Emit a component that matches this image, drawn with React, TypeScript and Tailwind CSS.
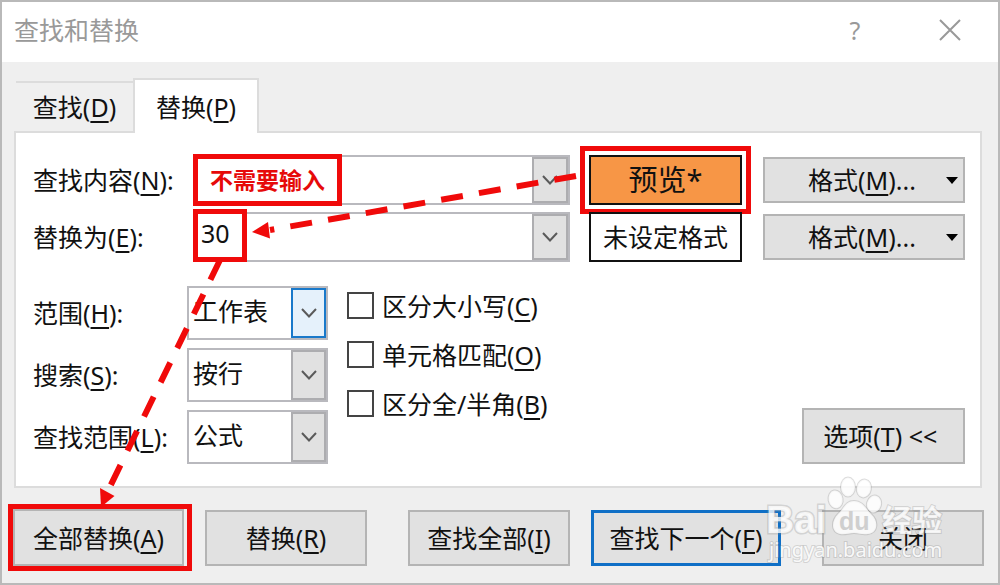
import type { ReactNode } from "react";

const BUTTON =
  "flex items-center justify-center border-2 border-[#b4b4b4] bg-[#e1e1e1] whitespace-nowrap";

function Mnemonic({ text, k, after = "" }: { text: string; k: string; after?: string }) {
  return (
    <span className="whitespace-pre">
      {text}(<span className="underline decoration-2 underline-offset-4">{k}</span>){after}
    </span>
  );
}

function Chevron() {
  return (
    <svg width="18" height="12" viewBox="0 0 18 12" fill="none" stroke="#5a5a5a" strokeWidth="2" aria-hidden="true">
      <path d="M2 2l7 7.5L16 2" />
    </svg>
  );
}

function Combo({ id, value, children }: { id: string; value: string; children?: ReactNode }) {
  return (
    <div className="relative flex h-[50px] min-w-0 flex-1 border-2 border-[#b9b9be] bg-white">
      <input id={id} defaultValue={value} className="min-w-0 flex-1 bg-transparent pb-2 pl-[6px] outline-none" />
      <button
        type="button"
        aria-label="展开列表"
        className="flex w-9 items-center justify-center border-2 border-[#adadb0] bg-[#e1e1e1]"
      >
        <Chevron />
      </button>
      {children}
    </div>
  );
}

function FormatButton() {
  return (
    <button type="button" className={`${BUTTON} relative h-[46px] w-[202px] pr-1`}>
      <Mnemonic text="格式" k="M" after="..." />
      <svg className="absolute right-1" width="14" height="8" viewBox="0 0 14 8" aria-hidden="true">
        <path d="M1 1h12L7 8z" fill="#000" />
      </svg>
    </button>
  );
}

function SelectRow({ id, text, k, value, hot }: { id: string; text: string; k: string; value: string; hot?: boolean }) {
  return (
    <div className="flex items-center">
      <label htmlFor={id} className="w-[154px]">
        <Mnemonic text={text} k={k} after=":" />
      </label>
      <div className="relative flex h-[54px] w-[141px] border-2 border-[#b9b9be] bg-white">
        <select id={id} className="w-full appearance-none bg-transparent pb-1 pl-1 outline-none">
          <option>{value}</option>
        </select>
        <span
          className={`pointer-events-none absolute inset-y-0 right-0 flex w-[35px] items-center justify-center border-2 ${
            hot ? "border-[#1979ca] bg-[#e5f1fb]" : "border-[#adadb0] bg-[#e1e1e1]"
          }`}
        >
          <Chevron />
        </span>
      </div>
    </div>
  );
}

function CheckRow({ text, k }: { text: string; k: string }) {
  return (
    <label className="flex h-[49px] items-center gap-2">
      <input type="checkbox" className="size-[27px] appearance-none border-2 border-[#444] bg-white" />
      <Mnemonic text={text} k={k} />
    </label>
  );
}

function Annotations() {
  return (
    <svg className="pointer-events-none absolute -top-[2px] -left-[2px]" width="1000" height="585" fill="none" stroke="#f00a0a" aria-hidden="true">
      <path d="M576 176L270 230" strokeWidth="6" strokeDasharray="22 16.3" />
      <path d="M252 232L268 222L270 238.500Z" fill="#f00a0a" stroke="none" />
      <path d="M220 260L106 495" strokeWidth="6" strokeDasharray="22 16" />
      <path d="M100 488L114.500 496L101 507Z" fill="#f00a0a" stroke="none" />
    </svg>
  );
}

function Watermark() {
  return (
    <svg
      className="pointer-events-none absolute right-[50px] bottom-[18px]"
      width="182"
      height="92"
      viewBox="0 0 182 92"
      fill="#fff"
      fillOpacity="0.8"
      stroke="#8c8c8c"
      strokeOpacity="0.3"
      strokeWidth="2"
      paintOrder="stroke"
    >
      <g transform="translate(2 2)">
        <ellipse cx="67.500" cy="24.500" rx="7" ry="9" transform="rotate(-10 67 24)" />
        <ellipse cx="80" cy="12" rx="7" ry="9.500" />
        <ellipse cx="96" cy="13.500" rx="7" ry="9" transform="rotate(10 96 13)" />
        <ellipse cx="106" cy="29" rx="7" ry="8.500" transform="rotate(15 106 29)" />
        <path d="M86 26C95 26 98 34 103 39C111 46 110 58 100 59C94 60 91 58 86 58C81 58 77 60 72 59C63 57 63 46 70 39C76 34 77 26 86 26Z" />
      </g>
      <g className="font-['Liberation_Sans',sans-serif] font-bold">
        <text x="0" y="60" fontSize="39" strokeWidth="3">Bai</text>
        <text x="73" y="57" fontSize="25" fill="#cfcfcf" stroke="none" fillOpacity="1">du</text>
      </g>
      <text x="116" y="58" fontSize="30" className="font-['Noto_Sans_CJK_SC',sans-serif] font-bold">经验</text>
      <text x="3" y="84" fontSize="20" fillOpacity="0.9" className="font-['Noto_Sans',sans-serif]">jingyan.baidu.com</text>
    </svg>
  );
}

export default function App() {
  return (
    <main className="relative min-h-screen border-2 border-[#b9b9b9] bg-[#efefef] font-['Noto_Sans','Noto_Sans_CJK_SC',sans-serif] text-[25px] leading-9 text-[#111]">
      <header className="flex h-[60px] items-center bg-white pr-9 pb-1 pl-3 text-[#999]">
        <h1 className="flex-1">查找和替换</h1>
        <button type="button" aria-label="帮助" className="w-8">?</button>
        <button type="button" aria-label="关闭窗口" className="ml-[67px]">
          <svg width="24" height="24" viewBox="0 0 24 24" stroke="#999" strokeWidth="2" aria-hidden="true">
            <path d="M2 2l20 20M22 2L2 22" />
          </svg>
        </button>
      </header>

      <div className="mr-4 ml-3 pt-4">
        <div role="tablist" className="flex items-end pl-[2px]">
          <button type="button" role="tab" aria-selected="false" className="h-[50px] w-[117px] border-t-2 border-[#dcdcdc]">
            <Mnemonic text="查找" k="D" />
          </button>
          <button
            type="button"
            role="tab"
            aria-selected="true"
            className="relative -mb-[2px] h-[55px] w-[126px] border-2 border-b-0 border-[#dcdcdc] bg-white"
          >
            <Mnemonic text="替换" k="P" />
          </button>
        </div>

        <section role="tabpanel" className="border-2 border-[#dcdcdc] bg-white pt-[22px] pr-[15px] pb-[22px] pl-[17px]">
          <div className="flex flex-col gap-[7px]">
            <div className="flex items-center">
              <label htmlFor="find" className="w-[160px]">
                <Mnemonic text="查找内容" k="N" after=":" />
              </label>
              <Combo id="find" value="">
                <div className="absolute -top-[3px] -left-[2px] flex h-[52px] w-[149px] items-center justify-center border-5 border-[#f00a0a] bg-white text-[23px] font-bold text-[#e60a0a]">
                  不需要输入
                </div>
              </Combo>
              <div className="ml-[19px] flex h-[50px] w-[153px] items-center justify-center border-2 border-[#111] bg-[#f79646] text-[29px] outline-5 outline-offset-4 outline-[#f00a0a]">
                预览*
              </div>
              <div className="ml-[21px]"><FormatButton /></div>
            </div>
            <div className="flex items-center">
              <label htmlFor="replace" className="w-[160px]">
                <Mnemonic text="替换为" k="E" after=":" />
              </label>
              <Combo id="replace" value="30">
                <div className="pointer-events-none absolute -top-[5px] -left-[2px] h-[53px] w-[54px] border-5 border-[#f00a0a]" />
              </Combo>
              <div className="ml-[19px] flex h-[50px] w-[153px] items-center justify-center border-2 border-[#111] bg-white">
                未设定格式
              </div>
              <div className="ml-[21px]"><FormatButton /></div>
            </div>
          </div>

          <div className="mt-6 flex">
            <div className="flex flex-col gap-2">
              <SelectRow id="within" text="范围" k="H" value="工作表" hot />
              <SelectRow id="search" text="搜索" k="S" value="按行" />
              <SelectRow id="lookin" text="查找范围" k="L" value="公式" />
            </div>
            <div className="-mt-[5px] ml-[19px] flex flex-col">
              <CheckRow text="区分大小写" k="C" />
              <CheckRow text="单元格匹配" k="O" />
              <CheckRow text="区分全/半角" k="B" />
            </div>
            <button type="button" className={`${BUTTON} ml-auto h-14 w-[163px] self-end`}>
              <Mnemonic text="选项" k="T" after=" << " />
            </button>
          </div>
        </section>
      </div>

      <footer className="mt-4 mb-3 flex justify-between pr-[14px] pl-[6px]">
        <div className="flex items-center gap-[13px]">
          <div className="border-5 border-[#f00a0a] pr-[3px]">
            <button type="button" className={`${BUTTON} h-[57px] w-[171px]`}>
              <Mnemonic text="全部替换" k="A" />
            </button>
          </div>
          <button type="button" className={`${BUTTON} h-14 w-[162px]`}>
            <Mnemonic text="替换" k="R" />
          </button>
        </div>
        <div className="flex items-center gap-[21px]">
          <button type="button" className={`${BUTTON} h-14 w-[162px]`}>
            <Mnemonic text="查找全部" k="I" />
          </button>
          <button type="button" className="flex h-14 w-[190px] items-center justify-center border-3 border-[#0f6fc6] bg-[#e1e1e1] whitespace-nowrap">
            <Mnemonic text="查找下一个" k="F" />
          </button>
        </div>
        <div className="flex items-center">
          <button type="button" className={`${BUTTON} h-14 w-[162px]`}>关闭</button>
        </div>
      </footer>

      <Annotations />
      <Watermark />
    </main>
  );
}
